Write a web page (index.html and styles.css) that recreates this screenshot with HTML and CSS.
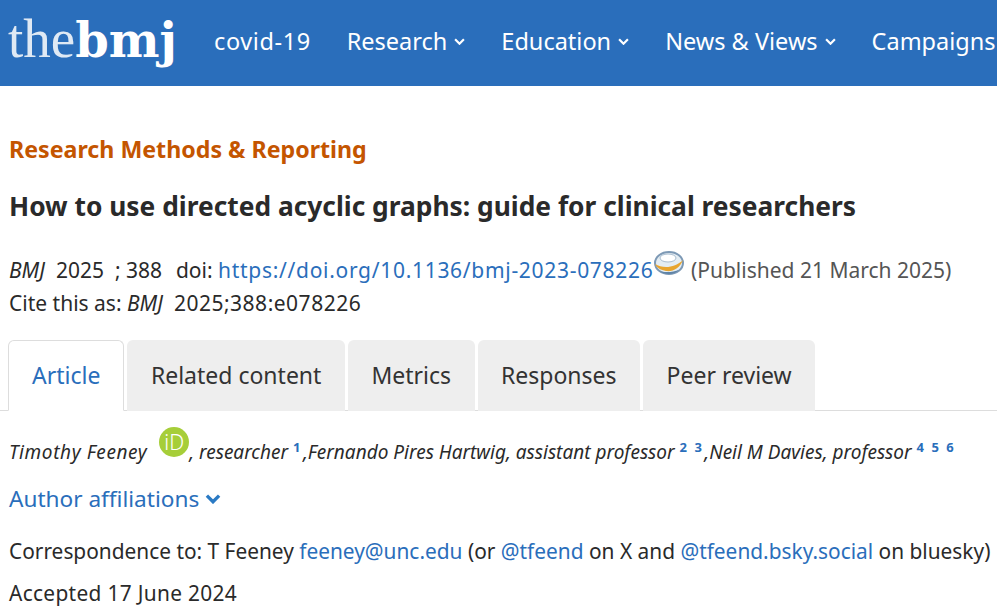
FILE: index.html
```html
<!DOCTYPE html>
<html lang="en">
<head>
<meta charset="utf-8">
<title>How to use directed acyclic graphs</title>
<link rel="stylesheet" href="styles.css">
</head>
<body>
<header class="topbar">
  <a class="logo"><span class="logo-the">the</span><span class="logo-bmj">bmj</span></a>
  <nav class="nav">
    <a class="nav-num">covid-19</a>
    <a>Research <svg class="caret" viewBox="0 0 10 6"><path d="M1 1l4 4 4-4"/></svg></a>
    <a>Education <svg class="caret" viewBox="0 0 10 6"><path d="M1 1l4 4 4-4"/></svg></a>
    <a>News &amp; Views <svg class="caret" viewBox="0 0 10 6"><path d="M1 1l4 4 4-4"/></svg></a>
    <a>Campaigns <svg class="caret" viewBox="0 0 10 6"><path d="M1 1l4 4 4-4"/></svg></a>
  </nav>
</header>
<main class="page">
  <p class="section">Research Methods &amp; Reporting</p>
  <h1 class="title">How to use directed acyclic graphs: guide for clinical researchers</h1>
  <p class="cite first"><i>BMJ</i>&nbsp; 2025&nbsp; ; 388 &nbsp;<span class="doi">doi:</span> <a class="link url">https://doi.org/10.1136/bmj-2023-078226</a><svg class="crossmark" viewBox="0 0 32 26"><ellipse cx="16" cy="12" rx="14" ry="11" fill="#e4edf3" stroke="#7d99b5" stroke-width="2"/><ellipse cx="15" cy="7" rx="8" ry="4" fill="#fff" stroke="#a9bdcf"/><path d="M2 13c8 5 20 4 28-4-3 8-10 12-17 11C8 19 4 17 2 13z" fill="#e8a52f"/><path d="M6 20c6 4 15 4 20-1-5 2-14 3-20 1z" fill="#5f83a6"/></svg> <span class="muted">(Published 21 March 2025)</span></p>
  <p class="cite">Cite this as: <i>BMJ</i>&nbsp; <span class="num">2025;388:e078226</span></p>
  <div class="tabs">
    <a class="tab active">Article</a>
    <a class="tab">Related content</a>
    <a class="tab">Metrics</a>
    <a class="tab">Responses</a>
    <a class="tab">Peer review</a>
  </div>
  <p class="authors"><span class="name">Timothy Feeney</span> <span class="orcid">iD</span>, researcher <sup>1</sup>,Fernando Pires Hartwig, assistant professor <sup>2</sup> <sup>3</sup>,Neil M Davies, professor <sup>4</sup> <sup>5</sup> <sup>6</sup></p>
  <p class="affil">Author affiliations <svg class="affil-caret" viewBox="0 0 14 9"><path d="M1.500 1.500L7 7l5.500-5.500"/></svg></p>
  <p class="body">Correspondence to: T Feeney <a class="link">feeney@unc.edu</a> (or <a class="link">@tfeend</a> on X and <a class="link">@tfeend.bsky.social</a> on bluesky)</p>
  <p class="body accepted">Accepted 17 June 2024</p>
</main>
</body>
</html>
```
FILE: styles.css
```css
* { box-sizing: border-box; }
html, body { margin: 0; height: 606px; overflow: hidden; background: #fff; }
body { font-family: "Noto Sans", "Lato", sans-serif; color: #2a2a2a; font-size: 20px; }
p, h1 { margin: 0; }

.topbar { height: 86px; background: #2a6ebb; display: flex; align-items: flex-start; padding-left: 8px; white-space: nowrap; overflow: hidden; }
.logo { flex: none; color: #fff; width: 206px; padding-top: 7px; line-height: 58px; display: block; }
.logo-the { font: 400 55px "Liberation Serif", serif; opacity: .85; }
.logo-bmj { font: 700 48px "DejaVu Serif", serif; }
.nav { display: flex; flex: none; gap: 36px; padding-top: 27px; font-size: 23.500px; line-height: 29px; color: #fff; }
.nav a { display: flex; align-items: center; gap: 7px; }
.nav .nav-num { letter-spacing: .6px; }
.caret { width: 11px; height: 7px; fill: none; stroke: #fff; stroke-width: 2; }

.page { padding: 0 0 0 9px; white-space: nowrap; }
.section { margin-top: 49px; font-size: 23.200px; line-height: 29px; font-weight: 700; color: #c45500; }
.title { margin-top: 26px; font-size: 26.350px; line-height: 32px; font-weight: 700; color: #2a2a2a; }
.cite { font-size: 21px; line-height: 34px; height: 34px; }
.cite.first { margin-top: 29px; height: 35px; }
.doi { margin-left: 3px; }
.url { letter-spacing: .7px; }
.num { letter-spacing: .5px; }
.link { color: #2a6ebb; }
.muted { color: #555; }
.crossmark { width: 32px; height: 26px; vertical-align: 1px; }

.tabs { display: flex; gap: 3px; margin: 20px 0 0 -9px; padding-left: 8px; height: 71px; border-bottom: 1px solid #ddd; align-items: flex-end; }
.tab { height: 71px; margin-bottom: -1px; padding: 0 23.500px; background: #eee; border-radius: 6px 6px 0 0; font-size: 23px; line-height: 71px; color: #333; }
.tab.active { padding: 0 23px; background: #fff; border: 1px solid #ddd; border-bottom: 1px solid #fff; color: #2a6ebb; line-height: 69px; }

.authors { margin-top: 16px; height: 30px; font-size: 19px; line-height: 30px; font-style: italic; }
.name { letter-spacing: .6px; }
.orcid { display: inline-block; width: 30px; height: 30px; margin-left: 7px; border-radius: 50%; background: #a6ce39; color: #fff; font-style: normal; font-size: 21px; font-weight: 300; line-height: 30px; text-align: center; vertical-align: 9px; }
.authors sup { font-size: 13px; font-weight: 700; font-style: normal; color: #2a6ebb; line-height: 0; margin-right: 2.500px; }
.affil { margin-top: 27px; font-size: 22.600px; line-height: 29px; color: #2a6ebb; display: flex; align-items: center; gap: 6px; }
.affil-caret { width: 16px; height: 10px; fill: none; stroke: #2a7ac4; stroke-width: 3; }
.body { margin-top: 24px; font-size: 20.870px; line-height: 29px; }
.body + .body { margin-top: 13px; }
.accepted { letter-spacing: .33px; }
```
